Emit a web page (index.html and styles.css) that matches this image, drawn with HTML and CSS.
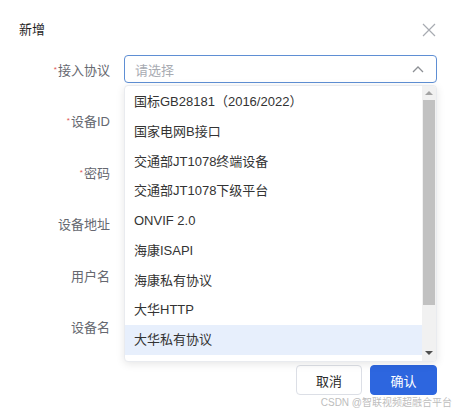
FILE: index.html
```html
<!DOCTYPE html>
<html lang="zh">
<head>
<meta charset="utf-8">
<title>新增</title>
<link rel="stylesheet" href="styles.css">
</head>
<body>
<div class="dialog">
  <div class="header">
    <span class="title">新增</span>
    <svg class="close" width="14" height="14" viewBox="0 0 14 14"><path d="M1 1 L13 13 M13 1 L1 13" stroke="#a8abb2" stroke-width="1.2" fill="none"/></svg>
  </div>
  <div class="form">
    <div class="row">
      <label class="label"><span class="req">*</span>接入协议</label>
      <div class="control select">
        <span class="placeholder">请选择</span>
        <svg class="chev" width="12" height="7" viewBox="0 0 12 7"><polyline points="1,6 6,1 11,6" stroke="#8d9095" stroke-width="1.3" fill="none"/></svg>
      </div>
    </div>
    <div class="row">
      <label class="label"><span class="req">*</span>设备ID</label>
      <div class="control input"></div>
    </div>
    <div class="row">
      <label class="label"><span class="req">*</span>密码</label>
      <div class="control input"></div>
    </div>
    <div class="row">
      <label class="label">设备地址</label>
      <div class="control input"></div>
    </div>
    <div class="row">
      <label class="label">用户名</label>
      <div class="control input"></div>
    </div>
    <div class="row">
      <label class="label">设备名</label>
      <div class="control input"></div>
    </div>
  </div>
  <div class="footer">
    <button class="btn cancel">取消</button>
    <button class="btn primary">确认</button>
  </div>

  <div class="dropdown">
    <ul class="options">
      <li>国标GB28181（2016/2022）</li>
      <li>国家电网B接口</li>
      <li>交通部JT1078终端设备</li>
      <li>交通部JT1078下级平台</li>
      <li>ONVIF 2.0</li>
      <li>海康ISAPI</li>
      <li>海康私有协议</li>
      <li>大华HTTP</li>
      <li class="hover">大华私有协议</li>
    </ul>
    <div class="scrollbar">
      <div class="arrow up"></div>
      <div class="track"><div class="thumb"></div></div>
      <div class="arrow down"></div>
    </div>
  </div>

  <div class="watermark">CSDN @智联视频超融合平台</div>
</div>
</body>
</html>
```
FILE: styles.css
```css
html, body {
  margin: 0;
  padding: 0;
  background: #fff;
}
.dialog {
  position: relative;
  width: 456px;
  height: 414px;
  overflow: hidden;
  font-family: "Liberation Sans", "Noto Sans CJK SC", sans-serif;
  font-size: 13px;
  color: #303133;
}
.header {
  display: flex;
  justify-content: space-between;
  align-items: center;
  padding: 22px 20px 0 19px;
  height: 16px;
}
.title {
  font-size: 13px;
  line-height: 16px;
  color: #1f1f1f;
}
.close {
  display: block;
}
.form {
  padding-top: 17px;
}
.row {
  display: flex;
  align-items: center;
  height: 28px;
  margin-bottom: 23.5px;
}
.label {
  width: 110px;
  flex: none;
  text-align: right;
  color: #666870;
  font-size: 13px;
}
.req {
  color: #e05252;
  font-size: 8px;
  position: relative;
  top: -3px;
  margin-right: 1px;
}
.control {
  margin-left: 14px;
  width: 313px;
  height: 28px;
  box-sizing: border-box;
  border: 1px solid #dcdfe6;
  border-radius: 4px;
}
.select {
  border-color: #5f8fd4;
  display: flex;
  align-items: center;
  justify-content: space-between;
  padding: 0 12px 0 10px;
}
.placeholder {
  color: #a8abb2;
}
.chev {
  display: block;
}
.footer {
  display: flex;
  justify-content: flex-end;
  gap: 8px;
  padding: 1px 19px 0 0;
}
.btn {
  height: 30px;
  font-family: inherit;
  font-size: 13px;
  border-radius: 4px;
  padding: 0;
  cursor: pointer;
}
.cancel {
  width: 66px;
  background: #fff;
  border: 1px solid #dcdfe6;
  color: #2b2b2b;
}
.primary {
  width: 67px;
  background: #2d66df;
  border: 1px solid #2d66df;
  color: #fff;
}
.dropdown {
  position: absolute;
  left: 124px;
  top: 85px;
  width: 313px;
  height: 277px;
  box-sizing: border-box;
  border: 1px solid #e9ebef;
  border-radius: 4px;
  background: #fff;
  box-shadow: 0 2px 8px rgba(0, 0, 0, 0.1);
  display: flex;
  overflow: hidden;
}
.options {
  list-style: none;
  margin: 0;
  padding: 1px 0 0 0;
  flex: 1;
}
.options li {
  height: 29.75px;
  line-height: 29.75px;
  padding-left: 9px;
  color: #333;
  white-space: nowrap;
}
.options li.hover {
  background: #e7effc;
}
.scrollbar {
  width: 14px;
  flex: none;
  background: #f1f1f1;
  display: flex;
  flex-direction: column;
}
.arrow {
  height: 14px;
  flex: none;
  display: flex;
  align-items: center;
  justify-content: center;
}
.arrow.up::before {
  content: "";
  border-left: 4px solid transparent;
  border-right: 4px solid transparent;
  border-bottom: 4px solid #a3a3a3;
}
.arrow.down {
  height: 16px;
}
.arrow.down::before {
  content: "";
  border-left: 4px solid transparent;
  border-right: 4px solid transparent;
  border-top: 4px solid #505050;
}
.track {
  flex: 1;
  display: flex;
  justify-content: center;
}
.thumb {
  width: 12px;
  height: 205px;
  background: #c1c1c1;
}
.watermark {
  position: absolute;
  right: 4px;
  top: 396px;
  font-size: 10px;
  line-height: 14px;
  color: #bdbdbd;
}
```
